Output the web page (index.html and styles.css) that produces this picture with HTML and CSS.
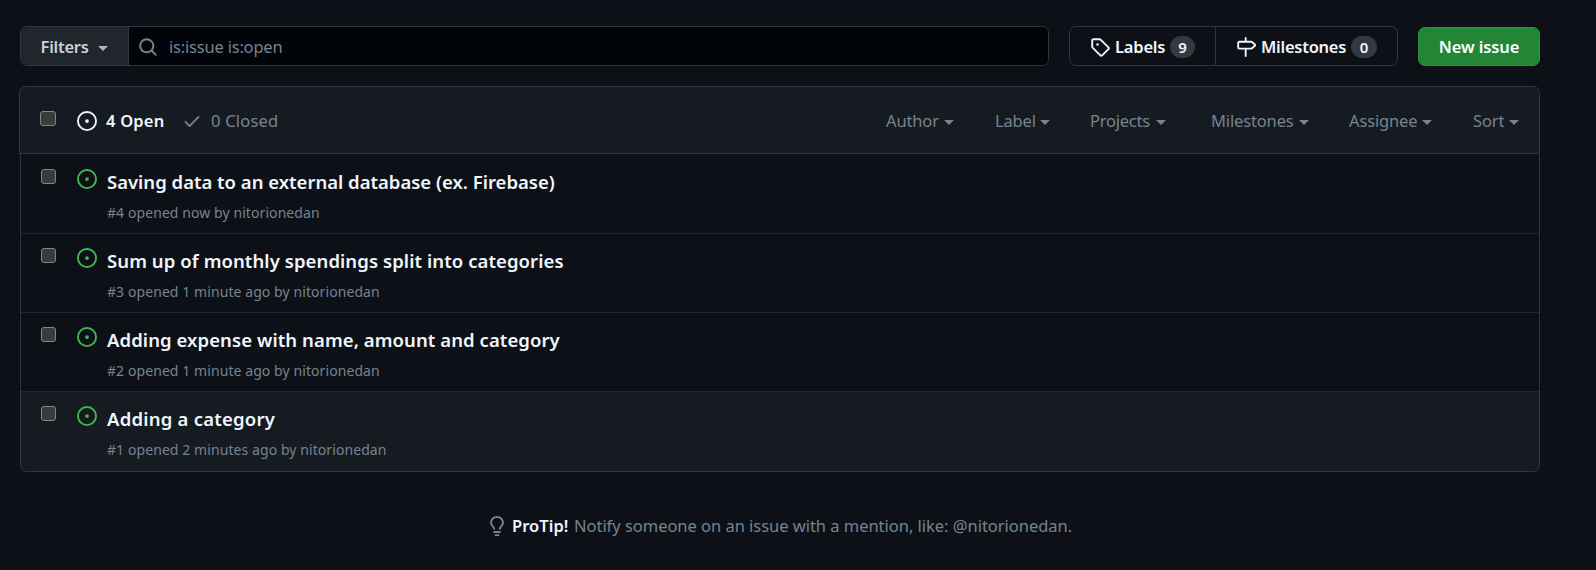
FILE: index.html
```html
<!DOCTYPE html>
<html lang="en">
<head>
<meta charset="utf-8">
<title>Issues</title>
<link rel="stylesheet" href="styles.css">
</head>
<body>
<svg class="defs" width="0" height="0">
  <symbol id="open" viewBox="0 0 16 16"><path d="M8 9.5a1.5 1.5 0 100-3 1.5 1.5 0 000 3z"/><path fill-rule="evenodd" d="M8 0a8 8 0 100 16A8 8 0 008 0zM1.5 8a6.5 6.5 0 1113 0 6.5 6.5 0 01-13 0z"/></symbol>
</svg>
<main class="page">
  <div class="toolbar">
    <div class="search">
      <button class="filters"><span class="t-filters">Filters</span><i class="caret"></i></button>
      <div class="query">
        <svg class="icon" viewBox="0 0 16 16"><path fill-rule="evenodd" d="M11.5 7a4.499 4.499 0 11-8.998 0A4.499 4.499 0 0111.5 7zm-.82 4.74a6 6 0 111.06-1.06l3.04 3.04a.75.75 0 11-1.06 1.06l-3.04-3.04z"/></svg>
        <span class="t-query">is:issue is:open</span>
      </div>
    </div>
    <nav class="links">
      <a class="link link-labels"><svg class="icon" viewBox="0 0 16 16"><path fill-rule="evenodd" d="M2.5 7.775V2.75a.25.25 0 01.25-.25h5.025a.25.25 0 01.177.073l6.25 6.25a.25.25 0 010 .354l-5.025 5.025a.25.25 0 01-.354 0l-6.25-6.25a.25.25 0 01-.073-.177zm-1.5 0V2.75C1 1.784 1.784 1 2.75 1h5.025c.464 0 .91.184 1.238.513l6.25 6.25a1.75 1.75 0 010 2.474l-5.026 5.026a1.75 1.75 0 01-2.474 0l-6.25-6.25A1.75 1.75 0 011 7.775zM6 5a1 1 0 100 2 1 1 0 000-2z"/></svg><span class="t-labels">Labels</span><span class="count">9</span></a>
      <a class="link link-milestones"><svg class="icon" viewBox="0 0 16 16"><path fill-rule="evenodd" d="M7.75 0a.75.75 0 01.75.75V3h3.634c.414 0 .814.147 1.13.414l2.07 1.75a1.75 1.75 0 010 2.672l-2.07 1.75a1.75 1.75 0 01-1.13.414H8.5v5.25a.75.75 0 11-1.5 0V10H2.75A1.75 1.75 0 011 8.25v-3.5C1 3.784 1.784 3 2.75 3H7V.75A.75.75 0 017.75 0zm0 8.5h4.384a.25.25 0 00.161-.06l2.07-1.75a.25.25 0 000-.38l-2.07-1.75a.25.25 0 00-.161-.06H2.75a.25.25 0 00-.25.25v3.5c0 .138.112.25.25.25h5z"/></svg><span class="t-milestones">Milestones</span><span class="count">0</span></a>
    </nav>
    <button class="new-issue"><span class="t-new">New issue</span></button>
  </div>

  <header class="list-head">
    <span class="checkbox"></span>
    <svg class="icon icon-open-head"><use href="#open"/></svg>
    <span class="open-count">4 Open</span>
    <svg class="icon icon-check" viewBox="0 0 16 16"><path fill-rule="evenodd" d="M13.78 4.22a.75.75 0 010 1.06l-7.25 7.25a.75.75 0 01-1.06 0L2.22 9.28a.75.75 0 011.06-1.06L6 10.94l6.72-6.72a.75.75 0 011.06 0z"/></svg>
    <span class="closed-count">0 Closed</span>
    <div class="menus">
      <span class="menu m-author">Author<i class="caret"></i></span>
      <span class="menu m-label">Label<i class="caret"></i></span>
      <span class="menu m-projects">Projects<i class="caret"></i></span>
      <span class="menu m-milestones">Milestones<i class="caret"></i></span>
      <span class="menu m-assignee">Assignee<i class="caret"></i></span>
      <span class="menu m-sort">Sort<i class="caret"></i></span>
    </div>
  </header>
  <ul class="list">
    <li class="issue">
      <span class="checkbox"></span><svg class="icon"><use href="#open"/></svg>
      <div class="body"><a class="title title-4">Saving data to an external database (ex. Firebase)</a><span class="meta">#4 opened now by nitorionedan</span></div>
    </li>
    <li class="issue">
      <span class="checkbox"></span><svg class="icon"><use href="#open"/></svg>
      <div class="body"><a class="title">Sum up of monthly spendings split into categories</a><span class="meta">#3 opened 1 minute ago by nitorionedan</span></div>
    </li>
    <li class="issue">
      <span class="checkbox"></span><svg class="icon"><use href="#open"/></svg>
      <div class="body"><a class="title">Adding expense with name, amount and category</a><span class="meta">#2 opened 1 minute ago by nitorionedan</span></div>
    </li>
    <li class="issue issue-active">
      <span class="checkbox"></span><svg class="icon"><use href="#open"/></svg>
      <div class="body"><a class="title title-1">Adding a category</a><span class="meta">#1 opened 2 minutes ago by nitorionedan</span></div>
    </li>
  </ul>
  <footer class="protip">
    <svg class="icon" viewBox="0 0 16 16"><path fill-rule="evenodd" d="M8 1.5c-2.363 0-4 1.69-4 3.75 0 .984.424 1.625.984 2.304l.214.253c.223.264.47.556.673.848.284.411.537.896.621 1.49a.75.75 0 01-1.484.211c-.04-.282-.163-.547-.37-.847a8.695 8.695 0 00-.542-.68c-.084-.1-.173-.205-.268-.32C3.201 7.75 2.5 6.766 2.5 5.25 2.5 2.31 4.863 0 8 0s5.5 2.31 5.5 5.25c0 1.516-.701 2.5-1.328 3.259-.095.115-.184.22-.268.319-.207.245-.383.453-.541.681-.208.3-.33.565-.37.847a.75.75 0 01-1.485-.212c.084-.593.337-1.078.621-1.489.203-.292.45-.584.673-.848.075-.088.147-.173.213-.253.561-.679.985-1.32.985-2.304 0-2.06-1.637-3.75-4-3.75zM6 15.25a.75.75 0 01.75-.75h2.5a.75.75 0 010 1.5h-2.5a.75.75 0 01-.75-.75zM5.75 12a.75.75 0 000 1.5h4.5a.75.75 0 000-1.5h-4.5z"/></svg>
    <strong class="protip-title">ProTip!</strong>
    <span class="protip-text">Notify someone on an issue with a mention, like: @nitorionedan.</span>
  </footer>
</main>
</body>
</html>
```
FILE: styles.css
```css
* { box-sizing: border-box; }
body {
  margin: 0;
  background: #0d1117;
  color: #f0f6fc;
  font: 16.5px/24px "Noto Sans", "Open Sans", sans-serif;
  white-space: nowrap;
}
.defs { display: block; }
.page { height: 570px; padding: 26px 56px 0 19px; }
.icon { width: 20px; height: 20px; fill: currentColor; flex: none; display: block; }
.caret {
  width: 0; height: 0; flex: none;
  border: 5px solid transparent;
  border-top-color: currentColor;
  border-bottom: 0;
}
button { font: inherit; color: inherit; padding: 0; }

.toolbar { display: flex; height: 40px; padding-left: 1px; }
.search { display: flex; width: 1029px; border: 1px solid #30363d; border-radius: 7px; overflow: hidden; }
.filters {
  display: flex; align-items: center; width: 108px; padding: 1px 0 0 19.5px;
  background: #21262d; color: #c9d1d9; border: 0; border-right: 1px solid #30363d; font-weight: 600;
}
.t-filters { width: 47.5px; letter-spacing: -.25px; text-align: left; }
.filters .caret { margin: 4px 0 0 10px; opacity: .85; }
.query { display: flex; align-items: center; flex: 1; padding-left: 9px; background: #010409; color: #768390; }
.query .icon { margin-top: 1px; }
.t-query { margin: 2px 0 0 11px; letter-spacing: -.2px; }
.links { display: flex; width: 329px; margin-left: 20px; border: 1px solid #30363d; border-radius: 7px; font-weight: 600; }
.link { display: flex; align-items: center; padding-left: 20px; }
.link .icon { margin-top: 1px; }
.link-labels { width: 146px; border-right: 1px solid #30363d; }
.t-labels { width: 50px; margin: 2px 5px 0; letter-spacing: -.2px; }
.t-milestones { width: 85px; margin: 2px 5px 0; letter-spacing: -.25px; }
.count {
  width: 25px; height: 22px; margin-top: 1px; border-radius: 11px; background: #343941;
  font-size: 15px; line-height: 22px; text-align: center;
}
.link-milestones .count { width: 26px; }
.new-issue {
  display: flex; justify-content: center; align-items: center;
  width: 122px; height: 39px; margin: 1px 0 0 20px; padding-top: 1px;
  background: #238636; border: 1px solid #2f9141; border-radius: 7px; color: #fff; font-weight: 600;
}
.t-new { letter-spacing: -.1px; }

.checkbox { width: 15px; height: 15px; flex: none; background: #3b3b3b; border: 1px solid #858585; border-radius: 3px; }
.list-head {
  display: flex; align-items: center; height: 68px; margin-top: 20px; padding-left: 20px;
  background: #161b22; border: 1px solid #30363d; border-radius: 7px 7px 0 0;
}
.list-head .checkbox { width: 16px; margin-top: -3px; }
.icon-open-head { margin: 2px 9px 0 21px; }
.open-count { width: 58px; margin-top: 2px; font-weight: 600; letter-spacing: .2px; }
.icon-check { margin: 2px 9px 0 18px; color: #768390; }
.closed-count { margin-top: 2px; color: #768390; letter-spacing: .2px; }
.menus { display: flex; gap: 41px; margin: 2px 0 0 auto; padding-right: 20px; color: #768390; }
.menu { display: flex; align-items: center; justify-content: space-between; letter-spacing: -.15px; }
.menu .caret { margin-top: 2px; }
.m-author { width: 68px; }
.m-label { width: 55px; }
.m-projects { width: 76px; margin-left: -1px; letter-spacing: -.25px; }
.m-milestones { width: 98px; margin-left: 4px; }
.m-assignee { width: 83px; margin-left: -1px; }
.m-sort { width: 46px; }

.list {
  margin: 0 0 0 1px; padding: 0; list-style: none;
  border: 1px solid #30363d; border-top: 0; border-radius: 0 0 7px 7px; overflow: hidden;
}
.issue { display: flex; height: 79px; padding: 14px 0 0 20px; border-top: 1px solid #21262d; }
.issue:first-child { padding-top: 15px; border-top: 0; }
.issue .icon { margin: 0 10px 0 21px; color: #3fb950; }
.issue-active { height: 80px; background: #161b22; }
.body { display: flex; flex-direction: column; }
.title { font-size: 18.5px; line-height: 26px; font-weight: 600; letter-spacing: .08px; }
.title-4 { letter-spacing: 0; }
.title-1 { letter-spacing: .22px; }
.meta { margin-top: 7px; font-size: 14px; line-height: 22px; color: #768390; letter-spacing: .08px; }

.protip { display: flex; align-items: center; margin-top: 42px; padding-left: 468px; color: #768390; }
.protip-title { width: 57px; margin-left: 5px; color: #f0f6fc; font-weight: 600; letter-spacing: .05px; }
.protip-text { margin-left: 5px; letter-spacing: -.03px; }
```
